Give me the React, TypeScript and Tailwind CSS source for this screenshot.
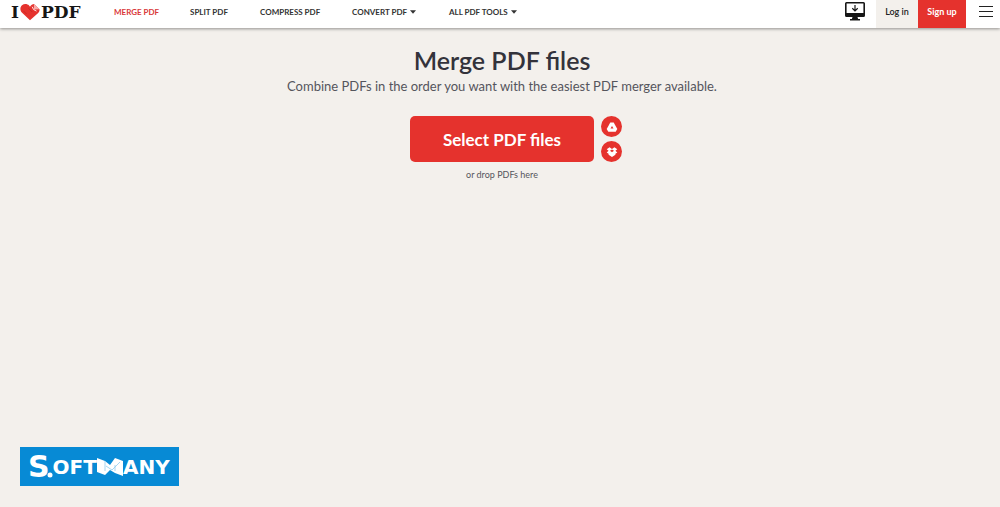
import { clsx } from 'clsx'

const NAV_ITEMS = [
    { label: 'MERGE PDF', width: 'w-[76px]', active: true },
    { label: 'SPLIT PDF', width: 'w-[70px]' },
    { label: 'COMPRESS PDF', width: 'w-[92px]' },
    { label: 'CONVERT PDF', width: 'w-[97px]', menu: true },
    { label: 'ALL PDF TOOLS', width: 'w-[80px]', menu: true },
]

const Caret = () => (
    <svg viewBox="0 0 6 4" className="h-1 w-1.5" fill="currentColor" aria-hidden="true">
        <path d="M0 .3h6L3 3.7z" />
    </svg>
)

const Logo = () => (
    <a
        href="#"
        aria-label="I love PDF"
        className="flex w-[103px] shrink-0 items-center pb-[5px] pl-[11px] font-['DejaVu_Serif',serif] text-[17px] leading-6 font-bold text-[#161616]"
    >
        <span>I</span>
        <svg viewBox="0 0 22 19" className="mx-px h-[18px] w-5 shrink-0" aria-hidden="true">
            <path
                d="M11 18.5 2 10C-.2 7.700 0 4 2.200 2.100 4.500.100 8 .300 10 2.400l1 1.200 1-1.200C12.800 1.500 14 .8 15.300.7L21.500 6.500c.2 1.500-.4 2.800-1.500 4z"
                fill="#e5322d"
            />
            <path d="M15.300.7 21.500 6.500l-5.200.3c-.7 0-1.100-.4-1.100-1z" fill="#f6aba8" />
            <path d="M13.300 3.700 15 6.900l3.200 1.600" fill="none" stroke="#fff" strokeWidth=".9" />
            <path d="m4 8.500 3.200 3.200M9.500 5.500l4 4" stroke="#c92722" strokeWidth="1" />
        </svg>
        <span>PDF</span>
    </a>
)

const DesktopIcon = () => (
    <svg viewBox="0 0 20 19" className="h-[19px] w-5" aria-hidden="true">
        <path d="M1.500 0h17A1.500 1.500 0 0 1 20 1.500v12a1.500 1.500 0 0 1-1.500 1.500h-17A1.500 1.500 0 0 1 0 13.500v-12A1.500 1.500 0 0 1 1.500 0zM1.600 1.500v9.500h16.800V1.500z" fill="#161616" fillRule="evenodd" />
        <path d="M7.500 15h5l.6 2h1.900v1.500H5V17h1.900z" fill="#161616" />
        <path d="M10 3v5.500M7.300 6.300 10 8.900l2.700-2.600" fill="none" stroke="#161616" strokeWidth="1.200" />
    </svg>
)

const DriveIcon = () => (
    <svg viewBox="0 0 12 12" className="size-3" aria-hidden="true">
        <path d="M4.300 1.500h3.400L11.300 8l-1.600 2.700H2.300L.7 8z" fill="#fff" />
        <path d="M6 4.900 7.500 7.500h-3z" fill="#e5322d" />
    </svg>
)

const DropboxIcon = () => (
    <svg viewBox="0 0 12 12" className="size-3" aria-hidden="true">
        <path d="M3.600 1.200 6 2.900l2.400-1.700 2.900 2-1.900 1.600 1.900 1.600-1.900 1.300v1.100L6 11 2.600 8.800V7.700L.7 6.400l1.900-1.600L.7 3.200z" fill="#fff" />
        <path d="m6 3.500 2 1.300-2 1.400-2-1.400z" fill="#e5322d" />
    </svg>
)

const Header = () => (
    <header className="relative flex h-7 items-stretch bg-white shadow-[0_1px_3px_rgba(0,0,0,0.4)]">
        <Logo />
        <nav className="flex flex-1 items-center pb-1 pl-[11px] text-[8px] leading-5 font-bold">
            {NAV_ITEMS.map((item) => (
                <div key={item.label} className={clsx('shrink-0', item.width)}>
                    <a
                        href="#"
                        className={clsx(
                            'inline-flex items-center gap-[3px] whitespace-nowrap',
                            item.active ? 'text-[#d9373a]' : 'text-[#333]'
                        )}
                    >
                        {item.label}
                        {item.menu && <Caret />}
                    </a>
                </div>
            ))}
        </nav>
        <div className="flex shrink-0 items-stretch text-[9px]">
            <a href="#" aria-label="Desktop app" className="mr-[11px] flex pt-0.5">
                <DesktopIcon />
            </a>
            <a href="#" className="flex w-[42px] items-center justify-center bg-[#f3f0ec] pb-1 font-semibold text-[#222]">
                Log in
            </a>
            <a href="#" className="flex w-12 items-center justify-center bg-[#e5322d] pb-1 font-bold text-white">
                Sign up
            </a>
            <button type="button" aria-label="Menu" className="flex w-[34px] items-start justify-end pt-1.5 pr-[7px]">
                <svg viewBox="0 0 14 11" className="h-[11px] w-3.5" aria-hidden="true">
                    <path d="M0 .5h14M0 5.500h14M0 10.500h14" stroke="#222" />
                </svg>
            </button>
        </div>
    </header>
)

const Watermark = () => (
    <div className="flex h-[39px] w-[159px] items-center bg-[#078ad5] pl-2 font-['DejaVu_Sans',sans-serif] text-xl font-bold text-white">
        <span className="text-3xl">S</span>
        <svg viewBox="0 0 3 20" className="h-5 w-[3px] shrink-0 overflow-visible" aria-hidden="true">
            <circle cx="0" cy="18" r="2.500" fill="#fff" />
        </svg>
        <span>OFT</span>
        <svg viewBox="0 0 26 20" className="h-5 w-[26px] shrink-0" aria-hidden="true">
            <path d="M0 1 8 4v14l-8-3z" fill="#fff" />
            <path d="m8 4 5 4 5-7 8 3v15l-8-3-5-3-5 5z" fill="#fff" />
            <path d="M8 4v10M9 9l6 4 8-8M18 8v6" fill="none" stroke="#8fcbee" strokeWidth=".8" />
        </svg>
        <span>ANY</span>
    </div>
)

export default function App() {
    return (
        <div className="flex min-h-screen flex-col bg-[#f3f0ec] font-['Lato',sans-serif]">
            <Header />
            <main className="flex flex-col items-center pt-4 pl-1 text-center">
                <h1 className="text-[25px] leading-8 font-semibold text-[#33333b]">Merge PDF files</h1>
                <p className="text-[13px] leading-5 text-[#55555c]">
                    Combine PDFs in the order you want with the easiest PDF merger available.
                </p>
                <div className="mt-5 grid w-full grid-cols-[1fr_auto_1fr]">
                    <button
                        type="button"
                        className="col-start-2 h-[46px] w-[184px] rounded-[5px] bg-[#e5322d] pt-0.5 text-[17px] font-bold text-white"
                    >
                        Select PDF files
                    </button>
                    <div className="ml-[7px] flex flex-col gap-1">
                        <button type="button" aria-label="Google Drive" className="flex size-[21px] items-center justify-center rounded-full bg-[#e5322d]">
                            <DriveIcon />
                        </button>
                        <button type="button" aria-label="Dropbox" className="flex size-[21px] items-center justify-center rounded-full bg-[#e5322d]">
                            <DropboxIcon />
                        </button>
                    </div>
                </div>
                <p className="mt-1.5 text-[9px] leading-3.5 text-[#55555c]">or drop PDFs here</p>
            </main>
            <footer className="mt-auto pb-[21px] pl-5">
                <Watermark />
            </footer>
        </div>
    )
}
